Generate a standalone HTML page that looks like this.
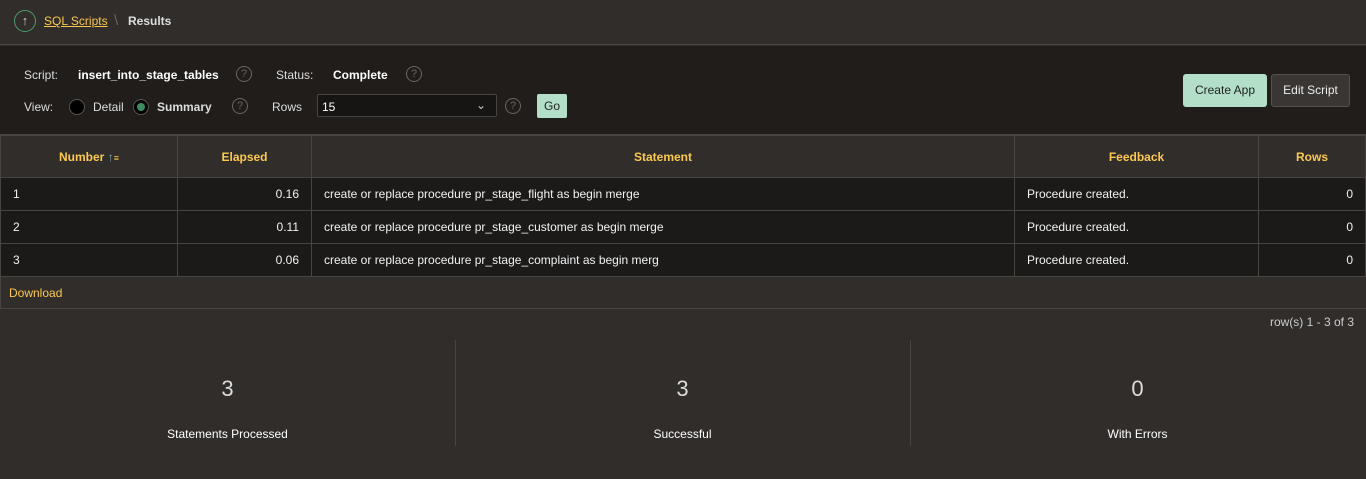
<!DOCTYPE html>
<html><head><meta charset="utf-8"><style>
*{box-sizing:border-box;margin:0;padding:0}
body{width:1366px;height:479px;background:#312d2a;font-family:"Liberation Sans",sans-serif;font-size:12px;color:#fff;position:relative;overflow:hidden}
.abs{position:absolute}
.top{left:0;top:0;width:1366px;height:45px;border-bottom:1px solid #48443f;background:#312d2a}
.form{left:0;top:46px;width:1366px;height:89px;background:#201d1b;border-bottom:1px solid #48443f}
.lbl{color:#ddd;font-size:12px}
.q{width:16px;height:16px;border:1px solid #6a6562;border-radius:50%;color:#6a6562;font-size:11px;text-align:center;line-height:14px}
table{position:absolute;left:0;top:135px;width:1366px;border-collapse:collapse}
th{height:42px;background:#312d2a;color:#fbc94f;font-weight:bold;border:1px solid #48443f;font-size:12px}
td{height:33px;background:#1b1a19;border:1px solid #48443f;padding:0 12px;color:#f2f2f2;font-size:12px}
.r{text-align:right}
.btn{height:33px;border-radius:3px;font-size:12px;line-height:33px;text-align:center}
.stat{top:340px;width:455px;height:106px;text-align:center}
.num{font-size:22px;color:#ddd;margin-top:36px}
.cap{font-size:12px;margin-top:25px;color:#fff}
</style></head><body>
<div class="abs top">
 <div class="abs" style="left:14px;top:10px;width:22px;height:22px;border:1px solid #4c9c6c;border-radius:50%;color:#ccc;text-align:center;line-height:20px;font-size:13px">↑</div>
 <div class="abs" style="left:44px;top:14px;color:#fbc94f;text-decoration:underline;font-size:12px">SQL Scripts</div>
 <div class="abs" style="left:114px;top:12px;color:#666;font-size:15px">\</div>
 <div class="abs" style="left:128px;top:14px;color:#ddd;font-weight:bold">Results</div>
</div>
<div class="abs form">
 <div class="abs lbl" style="left:24px;top:22px">Script:</div>
 <div class="abs" style="left:78px;top:22px;font-weight:bold">insert_into_stage_tables</div>
 <div class="abs q" style="left:236px;top:20px">?</div>
 <div class="abs lbl" style="left:276px;top:22px">Status:</div>
 <div class="abs" style="left:333px;top:22px;font-weight:bold">Complete</div>
 <div class="abs q" style="left:406px;top:20px">?</div>
 <div class="abs lbl" style="left:24px;top:54px">View:</div>
 <div class="abs" style="left:69px;top:53px;width:16px;height:16px;border-radius:50%;background:#000;border:1px solid #555"></div>
 <div class="abs lbl" style="left:93px;top:54px">Detail</div>
 <div class="abs" style="left:133px;top:53px;width:16px;height:16px;border-radius:50%;background:#000;border:1px solid #555"><div style="margin:3px;width:8px;height:8px;border-radius:50%;background:#3f8c5e"></div></div>
 <div class="abs" style="left:157px;top:54px;font-weight:bold;color:#ddd">Summary</div>
 <div class="abs q" style="left:232px;top:52px">?</div>
 <div class="abs lbl" style="left:272px;top:54px">Rows</div>
 <div class="abs" style="left:317px;top:48px;width:180px;height:23px;border:1px solid #48443f;background:#161514;border-radius:2px;padding:5px 4px;font-size:12px">15<span style="position:absolute;right:10px;top:3px;color:#ccc">⌄</span></div>
 <div class="abs q" style="left:505px;top:52px">?</div>
 <div class="abs" style="left:537px;top:48px;width:30px;height:24px;background:#b3dfc8;border-radius:2px;color:#222;text-align:center;line-height:24px">Go</div>
 <div class="abs btn" style="left:1183px;top:28px;width:84px;background:#b3dfc8;color:#222">Create App</div>
 <div class="abs btn" style="left:1271px;top:28px;width:79px;background:#3a3633;border:1px solid #55504c;color:#eee;line-height:31px">Edit Script</div>
</div>
<table>
<tr><th style="width:177px">Number <span style="color:#7ab">↑</span><span style="font-size:9px">≡</span></th><th style="width:134px">Elapsed</th><th style="width:703px">Statement</th><th style="width:244px">Feedback</th><th>Rows</th></tr>
<tr><td>1</td><td class="r">0.16</td><td>create or replace procedure pr_stage_flight as begin merge</td><td>Procedure created.</td><td class="r">0</td></tr>
<tr><td>2</td><td class="r">0.11</td><td>create or replace procedure pr_stage_customer as begin merge</td><td>Procedure created.</td><td class="r">0</td></tr>
<tr><td>3</td><td class="r">0.06</td><td>create or replace procedure pr_stage_complaint as begin merg</td><td>Procedure created.</td><td class="r">0</td></tr>
</table>
<div class="abs" style="left:0;top:276px;width:1366px;height:33px;border-bottom:1px solid #48443f;border-left:1px solid #48443f"></div>
<div class="abs" style="left:9px;top:286px;color:#fbc94f">Download</div>
<div class="abs" style="right:12px;top:315px;color:#ccc">row(s) 1 - 3 of 3</div>
<div class="abs stat" style="left:0"><div class="num">3</div><div class="cap">Statements Processed</div></div>
<div class="abs" style="left:455px;top:340px;width:1px;height:106px;background:#48443f"></div>
<div class="abs stat" style="left:455px"><div class="num">3</div><div class="cap">Successful</div></div>
<div class="abs" style="left:910px;top:340px;width:1px;height:106px;background:#48443f"></div>
<div class="abs stat" style="left:910px"><div class="num">0</div><div class="cap">With Errors</div></div>
</body></html>
